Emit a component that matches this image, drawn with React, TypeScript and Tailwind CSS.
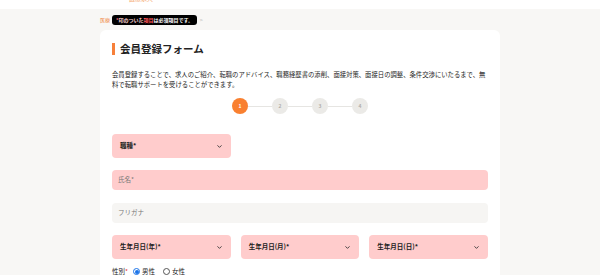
import React from 'react';

const font = { fontFamily: '"Noto Sans CJK JP", "Noto Sans", sans-serif' };

const Chevron = () => (
  <svg width="7" height="7" viewBox="0 0 24 24" fill="none" stroke="#333" strokeWidth="3" strokeLinecap="round" strokeLinejoin="round">
    <path d="M6 9l6 6 6-6" />
  </svg>
);

const SelectBox: React.FC<{ label: string; className?: string }> = ({ label, className }) => (
  <div className={`h-[24px] bg-[#ffcccc] rounded-[4px] flex items-center justify-between pl-[8px] pr-[8px] ${className ?? ''}`}>
    <span className="text-[6.5px] font-bold text-[#222]">{label}</span>
    <Chevron />
  </div>
);

const steps = [1, 2, 3, 4];

export default function App() {
  return (
    <div className="w-[600px] h-[275px] overflow-hidden bg-[#f8f7f5]" style={font}>
      <div className="h-[9px] bg-white relative overflow-hidden">
        <span className="absolute left-[129px] top-[-6px] text-[6px] text-[#f5a66b]">医療求人</span>
      </div>
      <div className="w-[400px] mx-auto">
        <div className="h-[21px] flex items-center gap-[2px] text-[5px]">
          <span className="text-[#f08a4b]">医療</span>
          <span className="bg-black text-white rounded-[3px] px-[4px] h-[10px] flex items-center font-bold">
            <span className="text-[#ff6b6b]">*</span>
            <span className="text-[#ffd6d6]">印のついた</span>
            <span className="text-[#ff5555]">項目</span>
            <span>は必須項目です。</span>
          </span>
          <span className="text-[#aaa] ml-[1px]">&gt;</span>
        </div>
        <div className="bg-white rounded-t-[6px] px-[12px] pt-[13px] h-[260px]">
          <div className="flex items-center gap-[5px] h-[12px]">
            <div className="w-[3px] h-[12px] bg-[#f7803a]" />
            <h1 className="text-[10.5px] font-bold text-[#222] leading-none">会員登録フォーム</h1>
          </div>
          <p className="mt-[15px] text-[6.35px] leading-[10px] text-[#222]">
            会員登録することで、求人のご紹介、転職のアドバイス、職務経歴書の添削、面接対策、面接日の調整、条件交渉にいたるまで、無料で転職サポートを受けることができます。
          </p>
          <div className="mt-[8px] flex items-center justify-center">
            {steps.map((s, i) => (
              <React.Fragment key={s}>
                {i > 0 && <div className="w-[24px] h-[1px] bg-[#e6e5e2]" />}
                <div
                  className={`w-[16px] h-[16px] rounded-full flex items-center justify-center text-[5px] font-bold ${
                    s === 1 ? 'bg-[#f98030] text-white' : 'bg-[#ebeae7] text-[#b0aeaa]'
                  }`}
                >
                  {s}
                </div>
              </React.Fragment>
            ))}
          </div>
          <div className="mt-[20px] flex flex-col">
            <SelectBox label="職種*" className="w-[119px]" />
            <div className="mt-[12px] h-[20px] bg-[#ffcccc] rounded-[4px] flex items-center px-[6px]">
              <span className="text-[6.5px] text-[#777]">氏名*</span>
            </div>
            <div className="mt-[13px] h-[20px] bg-[#f6f5f3] rounded-[4px] flex items-center px-[6px]">
              <span className="text-[6.5px] text-[#777]">フリガナ</span>
            </div>
            <div className="mt-[12px] grid grid-cols-3 gap-[10px]">
              <SelectBox label="生年月日(年)*" />
              <SelectBox label="生年月日(月)*" />
              <SelectBox label="生年月日(日)*" />
            </div>
            <div className="mt-[8px] flex items-center gap-[2px] text-[6.5px] text-[#222]">
              <span>
                性別<span className="text-[#e33]">*</span>
              </span>
              <span className="ml-[3px] w-[7px] h-[7px] rounded-full border border-[#1a73e8] flex items-center justify-center">
                <span className="w-[4px] h-[4px] rounded-full bg-[#1a73e8]" />
              </span>
              <span>男性</span>
              <span className="ml-[6px] w-[7px] h-[7px] rounded-full border border-[#555]" />
              <span>女性</span>
            </div>
          </div>
        </div>
      </div>
    </div>
  );
}
